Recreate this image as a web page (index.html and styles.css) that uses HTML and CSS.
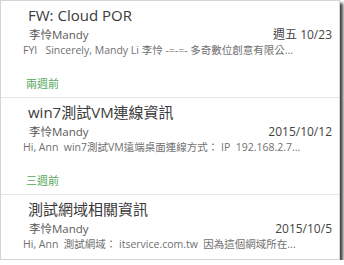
FILE: index.html
```html
<!DOCTYPE html>
<html lang="zh-TW">
<head>
  <meta charset="UTF-8">
  <title>郵件清單</title>
  <link rel="stylesheet" href="styles.css">
</head>
<body>
  <div class="frame">
    <div class="mail">
      <div class="subject">FW: Cloud POR</div>
      <div class="meta">
        <span class="sender">李怜Mandy</span>
        <span class="date">週五 10/23</span>
      </div>
      <div class="preview">FYI&nbsp;&nbsp; Sincerely, Mandy Li 李怜 -=-=- 多奇數位創意有限公...</div>
    </div>

    <div class="group">兩週前</div>

    <div class="mail">
      <div class="subject">win7測試VM連線資訊</div>
      <div class="meta">
        <span class="sender">李怜Mandy</span>
        <span class="date">2015/10/12</span>
      </div>
      <div class="preview">Hi, Ann&nbsp; win7測試VM遠端桌面連線方式： IP&nbsp; 192.168.2.7...</div>
    </div>

    <div class="group">三週前</div>

    <div class="mail">
      <div class="subject">測試網域相關資訊</div>
      <div class="meta">
        <span class="sender">李怜Mandy</span>
        <span class="date">2015/10/5</span>
      </div>
      <div class="preview">Hi, Ann&nbsp; 測試網域： itservice.com.tw&nbsp; 因為這個網域所在...</div>
    </div>
  </div>
</body>
</html>
```

FILE: styles.css
```css
body {
  margin: 0;
  background: #fff;
  font-family: "Open Sans", "Noto Sans CJK TC", sans-serif;
}
.frame {
  width: 338px;
  height: 258px;
  border: 1px solid #d4d4d4;
  background: #fff;
  box-shadow: 3px 3px 3px rgba(0, 0, 0, 0.75);
  overflow: hidden;
}
.mail {
  padding: 2px 7px 12px 22px;
}
.subject {
  padding-left: 5px;
  font-size: 15px;
  line-height: 24px;
  color: #3a3a3a;
  white-space: nowrap;
}
.meta {
  display: flex;
  justify-content: space-between;
  align-items: center;
  line-height: 16px;
  padding-left: 6px;
}
.sender {
  font-size: 11.5px;
  color: #5a5a5a;
}
.date {
  font-size: 12px;
  color: #444;
}
.preview {
  font-size: 10.5px;
  line-height: 15px;
  color: #707070;
  white-space: nowrap;
}
.group {
  padding: 7px 0 6px 25px;
  font-size: 11px;
  line-height: 14px;
  color: #56a85c;
  border-bottom: 1px solid #e6e6e6;
}
```
